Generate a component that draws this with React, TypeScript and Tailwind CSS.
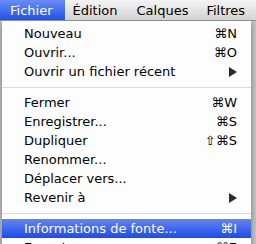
import React from "react";

type Item =
  | { type: "item"; label: string; shortcut?: string; submenu?: boolean; active?: boolean }
  | { type: "sep" };

const items: Item[] = [
  { type: "item", label: "Nouveau", shortcut: "⌘N" },
  { type: "item", label: "Ouvrir...", shortcut: "⌘O" },
  { type: "item", label: "Ouvrir un fichier récent", submenu: true },
  { type: "sep" },
  { type: "item", label: "Fermer", shortcut: "⌘W" },
  { type: "item", label: "Enregistrer...", shortcut: "⌘S" },
  { type: "item", label: "Dupliquer", shortcut: "⇧⌘S" },
  { type: "item", label: "Renommer..." },
  { type: "item", label: "Déplacer vers..." },
  { type: "item", label: "Revenir à", submenu: true },
  { type: "sep" },
  { type: "item", label: "Informations de fonte...", shortcut: "⌘I", active: true },
  { type: "item", label: "Exporter...", shortcut: "⌘E" },
];

function Arrow({ active }: { active?: boolean }) {
  return (
    <svg width="8" height="10" viewBox="0 0 8 10" className="block">
      <polygon points="0,0 8,5 0,10" fill={active ? "#fff" : "#2a2a2a"} />
    </svg>
  );
}

export default function App() {
  const font = { fontFamily: '"DejaVu Sans", "Lucida Grande", sans-serif' };
  return (
    <div
      className="w-[256px] h-[244px] overflow-hidden bg-[#c4c4c4] relative text-[13px] leading-none text-black"
      style={font}
    >
      <div className="h-[21px] flex items-stretch bg-gradient-to-b from-[#f4f4f4] to-[#d3d3d3] border-b border-[#8e8e8e] relative z-10">
        <div className="flex items-center pl-[10px] pr-[12px] bg-gradient-to-b from-[#6a8cf4] to-[#1f50ea] text-white">
          Fichier
        </div>
        <div className="flex items-center pl-[8px]">Édition</div>
        <div className="flex items-center pl-[19px]">Calques</div>
        <div className="flex items-center pl-[18px]">Filtres</div>
      </div>
      <div className="ml-[2px] w-[249px] bg-[#fdfdfd] pt-[3px] shadow-[0_2px_6px_rgba(0,0,0,0.4)]">
        {items.map((it, i) =>
          it.type === "sep" ? (
            <div key={i} className="h-[12px] flex items-center">
              <div className="h-px w-full bg-[#d9d9d9]" />
            </div>
          ) : (
            <div
              key={i}
              className={
                "h-[19px] flex items-center pl-[22px] pr-[14px] " +
                (it.active
                  ? "bg-gradient-to-b from-[#6383f3] to-[#1c4be8] text-white"
                  : "")
              }
            >
              <span className="flex-1 whitespace-nowrap">{it.label}</span>
              {it.shortcut && <span className="whitespace-nowrap">{it.shortcut}</span>}
              {it.submenu && <Arrow active={it.active} />}
            </div>
          )
        )}
      </div>
    </div>
  );
}
